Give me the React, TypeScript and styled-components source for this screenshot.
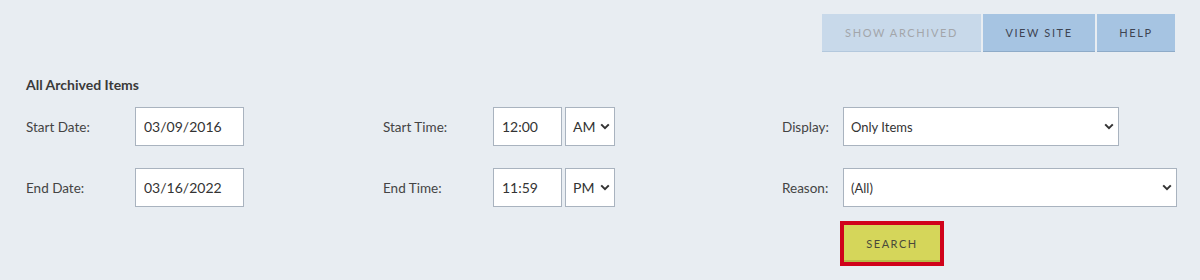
import React from "react";
import styled, { createGlobalStyle } from "styled-components";

const Global = createGlobalStyle`
  html, body { margin: 0; padding: 0; background: #e8edf2; }
  body { font-family: Lato, "Liberation Sans", sans-serif; color: #3a3a3a; }
  * { box-sizing: border-box; }
`;

const Page = styled.div`
  width: 1200px;
  height: 280px;
  background: #e8edf2;
  padding: 14px 25px 0 26px;
`;

const Toolbar = styled.div`
  display: flex;
  justify-content: flex-end;
  gap: 2px;
`;

const TopButton = styled.button<{ $disabled?: boolean; $w: number }>`
  width: ${(p) => p.$w}px;
  height: 38px;
  border: none;
  border-bottom: 1px solid ${(p) => (p.$disabled ? "#b3c8dd" : "#8eabc8")};
  background: ${(p) => (p.$disabled ? "#c8d9ea" : "#a6c4e2")};
  color: ${(p) => (p.$disabled ? "#a3a6aa" : "#3e4452")};
  font-family: inherit;
  font-size: 11px;
  letter-spacing: 1.6px;
  text-transform: uppercase;
  padding: 0;
  cursor: pointer;
`;

const Heading = styled.div`
  margin-top: 24px;
  font-size: 14px;
  font-weight: 700;
  color: #3a3a3a;
  height: 16px;
`;

const Form = styled.div`
  display: grid;
  grid-template-columns: 109px 248px 110px 289px 61px 1fr;
  grid-template-rows: 39px 39px 46px;
  row-gap: 22px;
  margin-top: 15px;
  align-items: center;
`;

const Label = styled.label`
  font-size: 13.5px;
  color: #444;
`;

const Field = styled.div`
  display: flex;
  gap: 3px;
  align-items: stretch;
  height: 39px;
`;

const TextInput = styled.input<{ $w: number }>`
  width: ${(p) => p.$w}px;
  height: 39px;
  border: 1px solid #a9b3bf;
  background: #fff;
  font-family: inherit;
  font-size: 14px;
  color: #333;
  padding: 0 8px;
  outline: none;
`;

const SelectBox = styled.div<{ $w: number }>`
  width: ${(p) => p.$w}px;
  height: 39px;
  border: 1px solid #a9b3bf;
  background: #fff;
  display: flex;
  align-items: center;
  justify-content: space-between;
  padding: 0 4px 0 7px;
  font-size: 13px;
  color: #333;
`;

const SelectText = styled.span<{ $big?: boolean }>`
  font-size: ${(p) => (p.$big ? "14px" : "13px")};
`;

const Chevron = () => (
  <svg width="10" height="7" viewBox="0 0 10 7">
    <path d="M1.2 1.4 L5 5.2 L8.8 1.4" fill="none" stroke="#333" strokeWidth="2" />
  </svg>
);

const SearchCell = styled.div`
  grid-column: 6;
  display: flex;
  align-items: flex-start;
  height: 46px;
`;

const SearchButton = styled.button`
  width: 104px;
  height: 45px;
  margin-left: -3px;
  margin-top: -8px;
  border: 4px solid #d0021b;
  background: #d5d65a;
  box-shadow: inset 0 -2px 0 #b7bb48;
  font-family: inherit;
  font-size: 11px;
  letter-spacing: 1.5px;
  color: #4a4a3a;
  padding: 0;
`;

const Empty = styled.div``;

export default function App() {
  return (
    <Page>
      <Global />
      <Toolbar>
        <TopButton $disabled $w={159}>Show Archived</TopButton>
        <TopButton $w={112}>View Site</TopButton>
        <TopButton $w={78}>Help</TopButton>
      </Toolbar>
      <Heading>All Archived Items</Heading>
      <Form>
        <Label>Start Date:</Label>
        <Field>
          <TextInput $w={109} defaultValue="03/09/2016" />
        </Field>
        <Label>Start Time:</Label>
        <Field>
          <TextInput $w={69} defaultValue="12:00" />
          <SelectBox $w={50}>
            <SelectText $big>AM</SelectText>
            <Chevron />
          </SelectBox>
        </Field>
        <Label>Display:</Label>
        <Field>
          <SelectBox $w={276}>
            <SelectText>Only Items</SelectText>
            <Chevron />
          </SelectBox>
        </Field>

        <Label>End Date:</Label>
        <Field>
          <TextInput $w={109} defaultValue="03/16/2022" />
        </Field>
        <Label>End Time:</Label>
        <Field>
          <TextInput $w={69} defaultValue="11:59" />
          <SelectBox $w={50}>
            <SelectText $big>PM</SelectText>
            <Chevron />
          </SelectBox>
        </Field>
        <Label>Reason:</Label>
        <Field>
          <SelectBox $w={334}>
            <SelectText>(All)</SelectText>
            <Chevron />
          </SelectBox>
        </Field>

        <Empty />
        <Empty />
        <Empty />
        <Empty />
        <Empty />
        <SearchCell>
          <SearchButton>SEARCH</SearchButton>
        </SearchCell>
      </Form>
    </Page>
  );
}
